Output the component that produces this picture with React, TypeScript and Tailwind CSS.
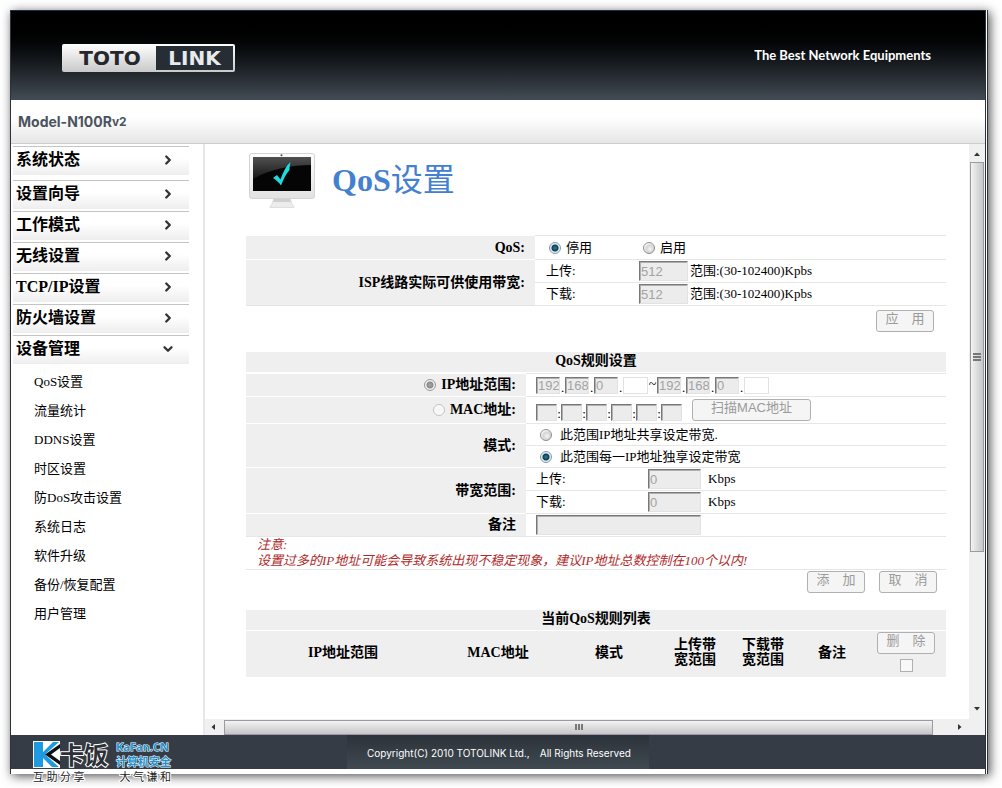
import { useState, type ReactNode } from 'react'
import { ChevronDown, ChevronRight } from 'lucide-react'
import clsx from 'clsx'

const menu = ['系统状态', '设置向导', '工作模式', '无线设置', 'TCP/IP设置', '防火墙设置', '设备管理']

const submenu = [
  'QoS设置',
  '流量统计',
  'DDNS设置',
  '时区设置',
  '防DoS攻击设置',
  '系统日志',
  '软件升级',
  '备份/恢复配置',
  '用户管理',
]

const fieldStyle =
  "border border-[#e2e2e2] border-t-[#777777] border-l-[#777777] bg-[#ececec] pl-px font-['Liberation_Sans'] text-[13px] leading-none text-[#a3a3a3] shadow-[inset_1px_1px_0_#b0b0b0]"

function Radio({
  name,
  id,
  checked,
  disabled,
  onChange,
}: {
  name: string
  id: string
  checked?: boolean
  disabled?: boolean
  onChange?: () => void
}) {
  return (
    <input
      type="radio"
      name={name}
      id={id}
      checked={!!checked}
      disabled={disabled}
      onChange={onChange}
      className="size-3 shrink-0 appearance-none rounded-full border border-[#8b8f94] bg-[radial-gradient(circle_at_60%_60%,#f4f4f4_0,#d4d4d4_45%,#ffffff_75%)] checked:border-[#7d9bae] checked:bg-[radial-gradient(circle,#2b7f96_0,#123c52_3px,#d9e8f0_4px,#ffffff_6px)] disabled:border-[#c4c4c4] disabled:bg-[radial-gradient(circle,#f4f4f4_0,#fafafa_6px)] disabled:checked:border-[#9a9a9a] disabled:checked:bg-[radial-gradient(circle,#a8a8a8_0,#8a8a8a_3px,#f0f0f0_4px)]"
    />
  )
}

function GreyButton({ children, className }: { children: ReactNode; className?: string }) {
  return (
    <button
      type="button"
      disabled
      className={clsx(
        "h-[22px] rounded-[3px] border border-[#b0b0b0] bg-[#f5f5f5] pb-1 font-['Liberation_Sans','Noto_Sans_CJK_SC',sans-serif] text-[13px] leading-4 text-[#9a9a9a]",
        className ?? 'w-[58px]',
      )}
    >
      {children}
    </button>
  )
}

function Label({ children, className }: { children: ReactNode; className?: string }) {
  return (
    <div
      className={clsx(
        'flex items-center justify-end border-t border-white bg-[#efefef] pr-2.5 text-sm leading-4 font-bold',
        className,
      )}
    >
      {children}
    </div>
  )
}

function Cell({ children, className }: { children: ReactNode; className?: string }) {
  return <div className={clsx('flex items-center border-t border-[#e6e6e6]', className)}>{children}</div>
}

function Logo() {
  return (
    <div className="mt-1 flex h-7 w-[173px] items-center rounded-xs bg-linear-to-b from-white to-[#c9c9c9] p-0.5 font-['DejaVu_Sans'] text-xl leading-none font-bold">
      <span className="flex-1 text-center text-[#24282d]">TOTO</span>
      <span className="flex h-6 w-[77px] items-center justify-center bg-[#272d35] text-[#e8eaec]">LINK</span>
    </div>
  )
}

function Monitor() {
  return (
    <svg viewBox="0 0 66 55" className="h-[55px] w-[66px]" aria-hidden="true">
      <defs>
        <linearGradient id="frame" x1="0" y1="0" x2="0" y2="1">
          <stop offset="0" stopColor="#ffffff" />
          <stop offset="1" stopColor="#e2e2e2" />
        </linearGradient>
        <linearGradient id="shine" x1="0" y1="0" x2="0" y2="1">
          <stop offset="0" stopColor="#6a6a6a" />
          <stop offset="1" stopColor="#1c1c1c" />
        </linearGradient>
      </defs>
      <path d="M25 45h16l2 6 2 2.500v1H21v-1l2-2.500z" fill="#ececec" stroke="#d6d6d6" strokeWidth=".7" />
      <path d="M25 46h16l1 3H24z" fill="#cfcfcf" />
      <rect x=".5" y=".5" width="65" height="45" rx="2.500" fill="url(#frame)" stroke="#d4d4d4" />
      <rect x="4" y="4" width="58" height="34" fill="#050505" />
      <path d="M4 4h58v8C42 12 22 16 4 26z" fill="url(#shine)" opacity=".75" />
      <circle cx="32.500" cy="2.200" r="1" fill="#444" />
      <path d="M24 25l4-3 3.500 4.500C34 19 37 13 41.500 9c-.5 3-1 5-1 8-3.500 4-6 9-8.500 15.500-2-3-5-5.500-8-7.500z" fill="#1fdcdc" />
    </svg>
  )
}

function Watermark() {
  return (
    <div className="absolute top-[5px] left-[22px] w-[138px] font-['Noto_Sans_CJK_SC']">
      <div className="flex h-7 items-center">
        <svg viewBox="0 0 27 27" className="size-[27px] shrink-0" aria-hidden="true">
          <rect width="27" height="27" fill="#fff" />
          <path d="M1 1h9v10L20 1h6L12 13.500 26 26h-7L10 17v9H1z" fill="#1e9be0" />
          <path d="M27 3v4L18 13.500 27 20v4L12 13.500z" fill="#111" />
        </svg>
        <span className="text-2xl leading-6 font-bold text-[#2d3035] [-webkit-text-stroke:2px_white] [paint-order:stroke]">
          卡饭
        </span>
        <span className="ml-2 flex flex-col text-[11px] leading-[14px] font-bold whitespace-nowrap text-[#2391cf] [-webkit-text-stroke:1px_white] [paint-order:stroke]">
          <span className="font-['Open_Sans']">KaFan.CN</span>
          <span>计算机安全</span>
        </span>
      </div>
      <div className="mt-0.5 flex justify-between text-[11px] leading-3 whitespace-nowrap text-[#222222] [-webkit-text-stroke:2px_white] [paint-order:stroke]">
        <span>互 助 分 享</span>
        <span>大 气 谦 和</span>
      </div>
    </div>
  )
}

function Sidebar() {
  return (
    <nav className="w-[192px] shrink-0 pt-0.5 pl-0.5">
      <ul className="w-44">
        {menu.map((item, i) => (
          <li key={item} className="mb-0.5 first:mb-[5px]">
            <a
              href="#"
              className="flex h-[29px] items-center justify-between border-t border-[#c4c4c4] bg-linear-to-b from-white from-40% to-[#eeeeee] pr-3.5 pb-0.5 pl-[3px] text-base leading-5 font-bold"
            >
              {item}
              {i === menu.length - 1 ? (
                <ChevronDown className="size-3.5 text-[#333333]" strokeWidth={4} />
              ) : (
                <ChevronRight className="size-3.5 text-[#333333]" strokeWidth={4} />
              )}
            </a>
          </li>
        ))}
      </ul>
      <ul className="pt-0.5 pl-[21px]">
        {submenu.map((item) => (
          <li key={item} className="h-[29px] text-[13px] leading-7">
            <a href="#">{item}</a>
          </li>
        ))}
      </ul>
    </nav>
  )
}

function IpFields({ who, disabled }: { who: string; disabled: boolean }) {
  return (
    <>
      {['192', '168', '0'].map((part, i) => (
        <span key={part} className="flex items-end">
          <input
            aria-label={`${who} ${i + 1}`}
            defaultValue={part}
            disabled={disabled}
            className={clsx(fieldStyle, 'h-[17px] w-6')}
          />
          <span className="w-[5px] text-center text-[13px] leading-3">.</span>
        </span>
      ))}
      <input aria-label={`${who} 4`} className="h-[17px] w-[25px] border border-[#e2e2e2] bg-white px-0.5 text-[13px]" />
    </>
  )
}

function Speed({ id, text, disabled }: { id: string; text: string; disabled: boolean }) {
  return (
    <Cell className="h-[23px] pl-[10px] text-[13px]">
      <label htmlFor={id} className="w-28">
        {text}
      </label>
      <input id={id} defaultValue="0" disabled={disabled} className={clsx(fieldStyle, 'h-5 w-[53px]')} />
      <span className="ml-[7px]">Kbps</span>
    </Cell>
  )
}

function Limit({ id, text, disabled }: { id: string; text: string; disabled: boolean }) {
  return (
    <Cell className="h-[23px] pl-[11px] text-[13px]">
      <label htmlFor={id} className="w-[93px]">
        {text}
      </label>
      <input id={id} defaultValue="512" disabled={disabled} className={clsx(fieldStyle, 'h-5 w-[49px]')} />
      <span className="ml-0.5">范围:(30-102400)Kpbs</span>
    </Cell>
  )
}

function QosForm() {
  const [enabled, setEnabled] = useState(false)
  const [shared, setShared] = useState(false)
  const off = !enabled

  return (
    <main className="min-w-0 flex-1 pr-[23px] pb-[42px] pl-[41px]">
      <h1 className="flex items-center gap-[17px] pt-[9px] pb-[27px] pl-[3px] text-[32px] leading-[55px] text-[#4380cf]">
        <Monitor />
        <span>
          <b>QoS</b>设置
        </span>
      </h1>

      <section className="grid grid-cols-[289px_1fr] border-b border-[#e6e6e6]">
        <Label>QoS:</Label>
        <Cell className="h-6 pl-3.5 text-[13px]">
          <Radio name="qos" id="qos-off" checked={off} onChange={() => setEnabled(false)} />
          <label htmlFor="qos-off" className="w-[82px] pl-[5px]">
            停用
          </label>
          <Radio name="qos" id="qos-on" checked={enabled} onChange={() => setEnabled(true)} />
          <label htmlFor="qos-on" className="ml-[5px]">
            启用
          </label>
        </Cell>
        <Label className="row-span-2">ISP线路实际可供使用带宽:</Label>
        <Limit id="isp-up" text="上传:" disabled={off} />
        <Limit id="isp-down" text="下载:" disabled={off} />
      </section>
      <div className="flex justify-end pt-1 pr-3">
        <GreyButton>应　用</GreyButton>
      </div>

      <section className="mt-5">
        <h2 className="mb-px h-5 bg-[#efefef] text-center text-sm leading-[18px] font-bold">QoS规则设置</h2>
        <div className="grid grid-cols-[280px_1fr] border-b border-[#e6e6e6]">
          <Label>
            <Radio name="target" id="by-ip" checked disabled={off} />
            <label htmlFor="by-ip" className="ml-[5px]">
              IP地址范围:
            </label>
          </Label>
          <Cell className="h-[23px] pl-[10px]">
            <IpFields who="起始IP" disabled={off} />
            <span className="w-[9px] text-center text-sm">~</span>
            <IpFields who="结束IP" disabled={off} />
          </Cell>
          <Label>
            <Radio name="target" id="by-mac" disabled={off} />
            <label htmlFor="by-mac" className="ml-[5px]">
              MAC地址:
            </label>
          </Label>
          <Cell className="h-[27px] pl-[10px]">
            <div className="flex items-end pt-1">
              {[1, 2, 3, 4, 5, 6].map((n) => (
                <span key={n} className="flex items-end">
                  <input aria-label={`MAC ${n}`} disabled={off} className={clsx(fieldStyle, 'h-[17px] w-[21px]')} />
                  {n < 6 && <span className="w-1 text-center text-[13px] leading-[14px]">:</span>}
                </span>
              ))}
            </div>
            <GreyButton className="ml-[10px] w-[119px]">扫描MAC地址</GreyButton>
          </Cell>
          <Label className="row-span-2">模式:</Label>
          <Cell className="h-[22px] pl-3.5 text-[13px]">
            <Radio name="mode" id="mode-shared" checked={shared} onChange={() => setShared(true)} />
            <label htmlFor="mode-shared" className="ml-2">
              此范围IP地址共享设定带宽.
            </label>
          </Cell>
          <Cell className="h-[22px] pl-3.5 text-[13px]">
            <Radio name="mode" id="mode-each" checked={!shared} onChange={() => setShared(false)} />
            <label htmlFor="mode-each" className="ml-2">
              此范围每一IP地址独享设定带宽
            </label>
          </Cell>
          <Label className="row-span-2">带宽范围:</Label>
          <Speed id="rule-up" text="上传:" disabled={off} />
          <Speed id="rule-down" text="下载:" disabled={off} />
          <Label>
            <label htmlFor="note">备注</label>
          </Label>
          <Cell className="h-[23px] pl-[10px]">
            <input id="note" disabled={off} className={clsx(fieldStyle, 'h-5 w-[165px]')} />
          </Cell>
          <p className="col-span-2 border-t border-[#e6e6e6] pl-[11px] text-[13px] leading-4 text-[#b02a2a] italic">
            注意:
            <br />
            设置过多的IP地址可能会导致系统出现不稳定现象，建议IP地址总数控制在100个以内!
          </p>
        </div>
        <div className="flex justify-end gap-3.5 pt-px pr-[9px]">
          <GreyButton>添　加</GreyButton>
          <GreyButton>取　消</GreyButton>
        </div>
      </section>

      <table className="mt-[17px] w-full table-fixed text-sm leading-[15px]">
        <caption className="mb-px h-5 bg-[#efefef] leading-[18px] font-bold">当前QoS规则列表</caption>
        <thead>
          <tr className="h-[46px] bg-[#efefef] *:pb-1">
            <th className="w-[194px]">IP地址范围</th>
            <th className="w-[116px]">MAC地址</th>
            <th className="w-[106px]">模式</th>
            <th className="w-[66px]">
              上传带
              <br />
              宽范围
            </th>
            <th className="w-[70px]">
              下载带
              <br />
              宽范围
            </th>
            <th className="w-[68px]">备注</th>
            <th>
              <div className="flex flex-col items-center gap-[5px] font-normal">
                <GreyButton>删　除</GreyButton>
                <input
                  type="checkbox"
                  aria-label="全选"
                  disabled
                  className="size-[13px] appearance-none border border-[#b0b0b0] bg-[#f8f8f8]"
                />
              </div>
            </th>
          </tr>
        </thead>
      </table>
    </main>
  )
}

function VerticalBar() {
  return (
    <div className="flex w-4 shrink-0 flex-col items-center bg-[#f0f0f0]" aria-hidden="true">
      <svg viewBox="0 0 8 4" className="mt-2 mb-1.5 h-1 w-2">
        <path d="M1 4l3-3.500 3 3.500z" fill="#333" />
      </svg>
      <div className="flex h-[390px] w-3.5 flex-col items-center justify-center gap-px border border-[#9a9aa0] bg-linear-to-r from-[#f3f3f3] via-[#dcdcde] to-[#c6c6ca]">
        <i className="h-0.5 w-2 bg-[#777777]" />
        <i className="h-0.5 w-2 bg-[#777777]" />
        <i className="h-0.5 w-2 bg-[#777777]" />
      </div>
      <svg viewBox="0 0 8 4" className="mt-auto mb-2 h-1 w-2">
        <path d="M1 0l3 3.500L7 0z" fill="#333" />
      </svg>
    </div>
  )
}

function HorizontalBar() {
  return (
    <div className="flex h-4 items-center bg-[#f0f0f0]" aria-hidden="true">
      <svg viewBox="0 0 4 8" className="mr-[9px] ml-1.5 h-2 w-1">
        <path d="M4 1L.5 4 4 7z" fill="#333" />
      </svg>
      <div className="flex h-[15px] flex-1 items-center justify-center gap-px border border-[#9a9aa0] bg-linear-to-b from-[#f3f3f3] via-[#dcdcde] to-[#c6c6ca]">
        <i className="h-1.5 w-0.5 bg-[#777777]" />
        <i className="h-1.5 w-0.5 bg-[#777777]" />
        <i className="h-1.5 w-0.5 bg-[#777777]" />
      </div>
      <svg viewBox="0 0 4 8" className="mr-[23px] ml-[25px] h-2 w-1">
        <path d="M0 1l3.500 3L0 7z" fill="#333" />
      </svg>
    </div>
  )
}

export default function App() {
  return (
    <div className="bg-white pt-[10px] pr-3.5 pb-3.5 pl-[10px] font-['Liberation_Serif','Noto_Sans_CJK_SC',serif] text-black">
      <div className="border-r-[3px] border-l border-double border-[#2b323b] bg-white pb-[5px] shadow-[2px_2px_10px_rgba(0,0,0,0.7)]">
        <header className="flex h-[90px] items-center justify-between border-t border-[#1b2c48] bg-linear-to-b from-black from-10% to-[#434c55] pr-[54px] pl-[51px]">
          <Logo />
          <p className="font-['Lato'] text-[13px] font-bold text-white">The Best Network Equipments</p>
        </header>
        <div className="flex h-11 items-center border-b border-[#cccccc] bg-linear-to-b from-white from-40% to-[#e6e6e6] pl-[7px] font-['Inter'] text-sm font-bold text-[#4b545e]">
          Model-N100R<span className="text-xs">v2</span>
        </div>
        <div className="flex">
          <Sidebar />
          <div className="flex min-w-0 flex-1 flex-col border-l-2 border-[#e8e8e8]">
            <div className="flex">
              <QosForm />
              <VerticalBar />
            </div>
            <HorizontalBar />
          </div>
        </div>
        <footer className="relative flex h-[34px] justify-center bg-[#353c45] px-4">
          <Watermark />
          <p className="flex w-[302px] items-center gap-2.5 bg-linear-to-b from-[#2c323a] to-[#414a51] pt-0.5 pl-5 font-['Inter'] text-[10px] whitespace-nowrap text-white">
            <span>Copyright(C) 2010 TOTOLINK Ltd.,</span>
            <span>All Rights Reserved</span>
          </p>
        </footer>
      </div>
    </div>
  )
}
